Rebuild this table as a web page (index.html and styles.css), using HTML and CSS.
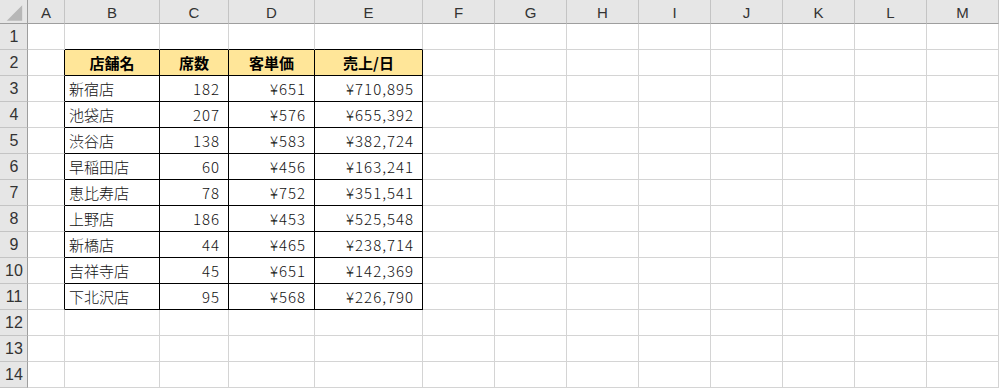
FILE: index.html
```html
<!DOCTYPE html>
<html lang="ja">
<head>
<meta charset="utf-8">
<title>Sheet</title>
<link rel="stylesheet" href="styles.css">
</head>
<body>
<div class="sheet">
  <div class="corner"><svg width="28" height="24" viewBox="0 0 28 24"><polygon points="7,21 23,21 23,5" fill="#b7b7b7"/></svg></div>
  <div class="ch">A</div><div class="ch">B</div><div class="ch">C</div><div class="ch">D</div><div class="ch">E</div><div class="ch">F</div><div class="ch">G</div><div class="ch">H</div><div class="ch">I</div><div class="ch">J</div><div class="ch">K</div><div class="ch">L</div><div class="ch">M</div>

  <div class="rh">1</div><div class="c"></div><div class="c bt"></div><div class="c bt"></div><div class="c bt"></div><div class="c bt"></div><div class="c"></div><div class="c"></div><div class="c"></div><div class="c"></div><div class="c"></div><div class="c"></div><div class="c"></div><div class="c"></div>

  <div class="rh">2</div><div class="c bl"></div><div class="t hd">店舗名</div><div class="t hd">席数</div><div class="t hd">客単価</div><div class="t hd">売上/日</div><div class="c"></div><div class="c"></div><div class="c"></div><div class="c"></div><div class="c"></div><div class="c"></div><div class="c"></div><div class="c"></div>

  <div class="rh">3</div><div class="c bl"></div><div class="t">新宿店</div><div class="t num">182</div><div class="t num">¥651</div><div class="t num">¥710,895</div><div class="c"></div><div class="c"></div><div class="c"></div><div class="c"></div><div class="c"></div><div class="c"></div><div class="c"></div><div class="c"></div>

  <div class="rh">4</div><div class="c bl"></div><div class="t">池袋店</div><div class="t num">207</div><div class="t num">¥576</div><div class="t num">¥655,392</div><div class="c"></div><div class="c"></div><div class="c"></div><div class="c"></div><div class="c"></div><div class="c"></div><div class="c"></div><div class="c"></div>

  <div class="rh">5</div><div class="c bl"></div><div class="t">渋谷店</div><div class="t num">138</div><div class="t num">¥583</div><div class="t num">¥382,724</div><div class="c"></div><div class="c"></div><div class="c"></div><div class="c"></div><div class="c"></div><div class="c"></div><div class="c"></div><div class="c"></div>

  <div class="rh">6</div><div class="c bl"></div><div class="t">早稲田店</div><div class="t num">60</div><div class="t num">¥456</div><div class="t num">¥163,241</div><div class="c"></div><div class="c"></div><div class="c"></div><div class="c"></div><div class="c"></div><div class="c"></div><div class="c"></div><div class="c"></div>

  <div class="rh">7</div><div class="c bl"></div><div class="t">恵比寿店</div><div class="t num">78</div><div class="t num">¥752</div><div class="t num">¥351,541</div><div class="c"></div><div class="c"></div><div class="c"></div><div class="c"></div><div class="c"></div><div class="c"></div><div class="c"></div><div class="c"></div>

  <div class="rh">8</div><div class="c bl"></div><div class="t">上野店</div><div class="t num">186</div><div class="t num">¥453</div><div class="t num">¥525,548</div><div class="c"></div><div class="c"></div><div class="c"></div><div class="c"></div><div class="c"></div><div class="c"></div><div class="c"></div><div class="c"></div>

  <div class="rh">9</div><div class="c bl"></div><div class="t">新橋店</div><div class="t num">44</div><div class="t num">¥465</div><div class="t num">¥238,714</div><div class="c"></div><div class="c"></div><div class="c"></div><div class="c"></div><div class="c"></div><div class="c"></div><div class="c"></div><div class="c"></div>

  <div class="rh">10</div><div class="c bl"></div><div class="t">吉祥寺店</div><div class="t num">45</div><div class="t num">¥651</div><div class="t num">¥142,369</div><div class="c"></div><div class="c"></div><div class="c"></div><div class="c"></div><div class="c"></div><div class="c"></div><div class="c"></div><div class="c"></div>

  <div class="rh">11</div><div class="c bl"></div><div class="t">下北沢店</div><div class="t num">95</div><div class="t num">¥568</div><div class="t num">¥226,790</div><div class="c"></div><div class="c"></div><div class="c"></div><div class="c"></div><div class="c"></div><div class="c"></div><div class="c"></div><div class="c"></div>

  <div class="rh">12</div><div class="c"></div><div class="c"></div><div class="c"></div><div class="c"></div><div class="c"></div><div class="c"></div><div class="c"></div><div class="c"></div><div class="c"></div><div class="c"></div><div class="c"></div><div class="c"></div><div class="c"></div>

  <div class="rh">13</div><div class="c"></div><div class="c"></div><div class="c"></div><div class="c"></div><div class="c"></div><div class="c"></div><div class="c"></div><div class="c"></div><div class="c"></div><div class="c"></div><div class="c"></div><div class="c"></div><div class="c"></div>

  <div class="rh">14</div><div class="c"></div><div class="c"></div><div class="c"></div><div class="c"></div><div class="c"></div><div class="c"></div><div class="c"></div><div class="c"></div><div class="c"></div><div class="c"></div><div class="c"></div><div class="c"></div><div class="c"></div>
</div>
</body>
</html>
```

FILE: styles.css
```css
html, body {
  margin: 0;
  padding: 0;
  background: #ffffff;
}

.sheet {
  display: grid;
  grid-template-columns: 28px 37px 95px 69px 86px 108px repeat(8, 72px);
  grid-template-rows: 24px repeat(14, 26px);
  font-family: "Noto Sans CJK JP", "Noto Sans", sans-serif;
  font-size: 15px;
  font-weight: 300;
  color: #111;
}

.sheet > div {
  box-sizing: border-box;
  border-right: 1px solid #d4d4d4;
  border-bottom: 1px solid #d4d4d4;
  display: flex;
  align-items: center;
  white-space: nowrap;
  overflow: hidden;
}

.sheet > .corner {
  background: #e6e6e6;
  border-right: 1px solid #9e9e9e;
  border-bottom: 1px solid #9e9e9e;
}

.corner svg {
  display: block;
}

.sheet > .ch {
  background: #e6e6e6;
  border-right: 1px solid #c4c4c4;
  border-bottom: 1px solid #9e9e9e;
  justify-content: center;
  font-family: "Liberation Sans", Arial, sans-serif;
  font-weight: normal;
  font-size: 15px;
  color: #333;
  padding-top: 1px;
}

.sheet > .rh {
  background: #e6e6e6;
  border-right: 1px solid #9e9e9e;
  border-bottom: 1px solid #c4c4c4;
  justify-content: center;
  font-family: "Liberation Sans", Arial, sans-serif;
  font-weight: normal;
  font-size: 16px;
  color: #333;
  padding-left: 1px;
}

.sheet > .bt {
  border-bottom: 1px solid #000;
}

.sheet > .bl {
  border-right: 1px solid #000;
}

.sheet > .t {
  border-right: 1px solid #000;
  border-bottom: 1px solid #000;
  padding-left: 4px;
  padding-right: 9px;
}

.sheet > .hd {
  background: #ffe699;
  font-weight: bold;
  color: #000;
  justify-content: center;
  padding-left: 0;
  padding-right: 0;
}

.sheet > .num {
  justify-content: flex-end;
  letter-spacing: 1px;
  padding-right: 8px;
}
```
